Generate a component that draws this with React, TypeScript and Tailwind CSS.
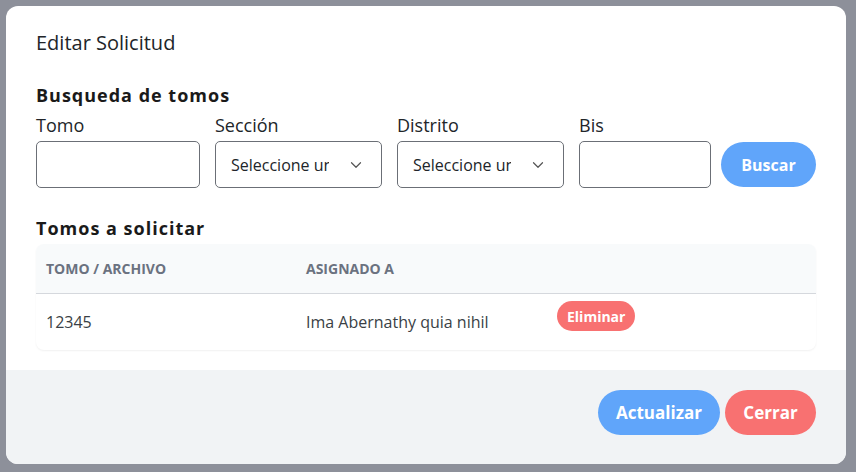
import { ChevronDown } from "lucide-react";

const font = { fontFamily: "'Open Sans', 'Noto Sans', sans-serif" };

const Field = ({ label, width, select }: { label: string; width: string; select?: boolean }) => (
  <div className={`flex flex-col ${width}`}>
    <label className="text-[18px] leading-[26px] text-[#212529] mb-[3px]">{label}</label>
    {select ? (
      <div className="h-[47px] border border-[#6b6f76] rounded-[5px] flex items-center pl-[15px] pr-[16px] justify-between">
        <span className="text-[16px] text-[#212529] w-[98px] overflow-hidden whitespace-nowrap">Seleccione una opción</span>
        <ChevronDown size={18} strokeWidth={1.6} className="text-[#555]" />
      </div>
    ) : (
      <input className="h-[47px] border border-[#6b6f76] rounded-[5px] outline-none px-3" />
    )}
  </div>
);

export default function App() {
  return (
    <div className="w-[856px] h-[472px] bg-[#8d909a] p-[6px] pb-[8px]" style={font}>
      <div className="w-[840px] h-[458px] bg-white rounded-[12px] overflow-hidden flex flex-col">
        <div className="px-[30px] pt-[23px] flex-1">
          <h1 className="text-[20px] leading-[28px] text-[#212529]">Editar Solicitud</h1>
          <h2 className="mt-[25px] text-[18px] leading-[26px] font-bold tracking-[1px] text-[#1a1a1a]">Busqueda de tomos</h2>
          <div className="mt-[4px] flex items-end gap-[15px]">
            <Field label="Tomo" width="w-[164px]" />
            <Field label="Sección" width="w-[167px]" select />
            <Field label="Distrito" width="w-[167px]" select />
            <Field label="Bis" width="w-[132px]" />
            <button className="ml-[-5px] mb-[1px] h-[45px] w-[95px] rounded-full bg-[#60a5fa] text-white font-bold text-[16px]">Buscar</button>
          </div>
          <h2 className="mt-[27px] text-[18px] leading-[26px] font-bold tracking-[1px] text-[#1a1a1a]">Tomos a solicitar</h2>
          <div className="mt-[3px] w-[780px] rounded-[8px] overflow-hidden shadow-[0_1px_2px_rgba(0,0,0,0.06)]">
            <div className="flex h-[50px] items-center bg-[#f8fafb] border-b border-[#d5d8dd] text-[14px] font-bold text-[#6b7280]">
              <div className="w-[260px] pl-[10px]">TOMO / ARCHIVO</div>
              <div className="pl-[10px]">ASIGNADO A</div>
            </div>
            <div className="flex h-[56px] items-center text-[16px] text-[#3a3f45]">
              <div className="w-[260px] pl-[10px]">12345</div>
              <div className="w-[251px] pl-[10px]">Ima Abernathy quia nihil</div>
              <div className="pl-[10px] self-start pt-[7px]">
                <span className="inline-flex items-center h-[30px] px-[10px] rounded-full bg-[#f87171] text-white font-bold text-[14px]">Eliminar</span>
              </div>
            </div>
          </div>
        </div>
        <div className="h-[94px] bg-[#f1f3f5] flex items-start pt-[20px] justify-end gap-[5px] px-[30px]">
          <button className="h-[45px] w-[122px] rounded-full bg-[#60a5fa] text-white font-bold text-[17px]">Actualizar</button>
          <button className="h-[45px] w-[91px] rounded-full bg-[#f87171] text-white font-bold text-[17px]">Cerrar</button>
        </div>
      </div>
    </div>
  );
}
